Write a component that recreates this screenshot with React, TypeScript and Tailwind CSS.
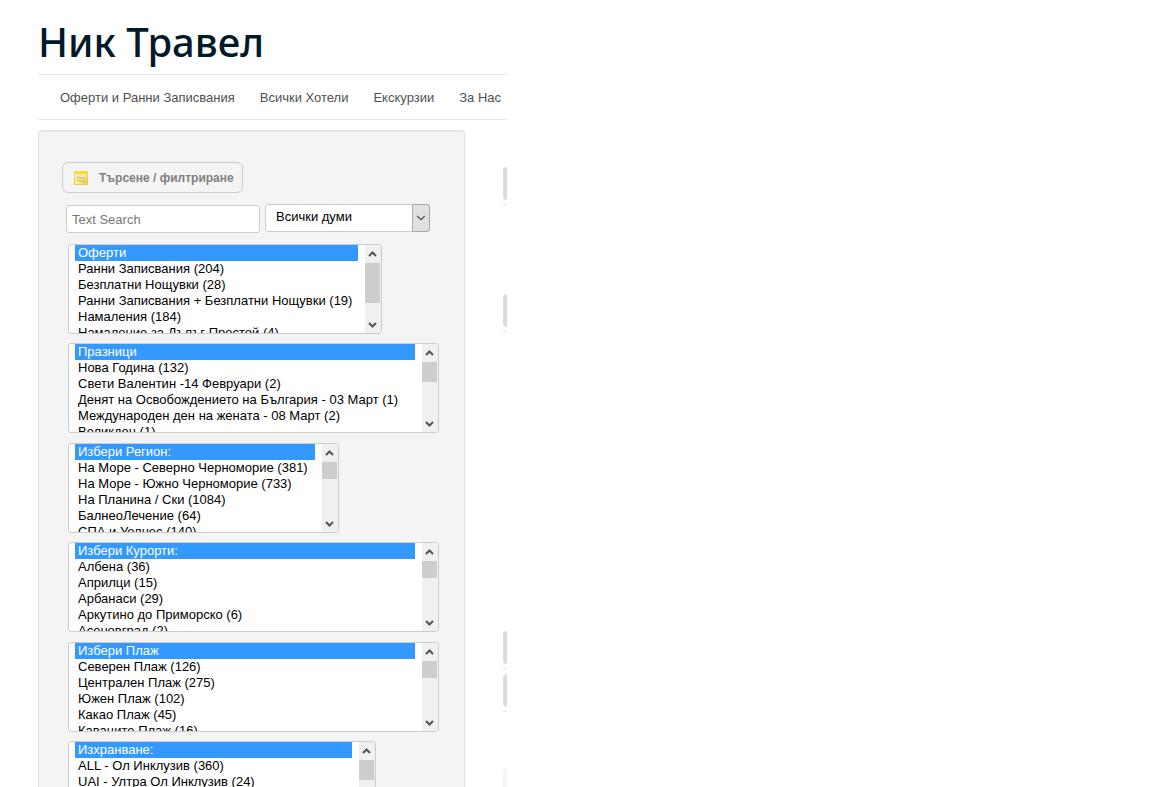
import React from 'react';
import { ChevronDown } from 'lucide-react';

type FilterList = {
  id: string;
  label: string;
  width: string;
  thumb: string;
  options: string[];
};

const filterGroups: FilterList[][] = [
  [
    {
      id: 'offers',
      label: 'Оферти',
      width: 'w-[314px]',
      thumb: 'h-10',
      options: [
        'Ранни Записвания (204)',
        'Безплатни Нощувки (28)',
        'Ранни Записвания + Безплатни Нощувки (19)',
        'Намаления (184)',
        'Намаление за Дълъг Престой (4)',
      ],
    },
    {
      id: 'holidays',
      label: 'Празници',
      width: 'w-[371px]',
      thumb: 'h-5',
      options: [
        'Нова Година (132)',
        'Свети Валентин -14 Февруари (2)',
        'Денят на Освобождението на България - 03 Март (1)',
        'Международен ден на жената - 08 Март (2)',
        'Великден (1)',
      ],
    },
  ],
  [
    {
      id: 'region',
      label: 'Избери Регион:',
      width: 'w-[271px]',
      thumb: 'h-[17px]',
      options: [
        'На Море - Северно Черноморие (381)',
        'На Море - Южно Черноморие (733)',
        'На Планина / Ски (1084)',
        'БалнеоЛечение (64)',
        'СПА и Уелнес (140)',
      ],
    },
    {
      id: 'resort',
      label: 'Избери Курорти:',
      width: 'w-[371px]',
      thumb: 'h-[17px]',
      options: [
        'Албена (36)',
        'Априлци (15)',
        'Арбанаси (29)',
        'Аркутино до Приморско (6)',
        'Асеновград (2)',
      ],
    },
  ],
  [
    {
      id: 'beach',
      label: 'Избери Плаж',
      width: 'w-[371px]',
      thumb: 'h-[17px]',
      options: [
        'Северен Плаж (126)',
        'Централен Плаж (275)',
        'Южен Плаж (102)',
        'Какао Плаж (45)',
        'Каваците Плаж (16)',
      ],
    },
    {
      id: 'board',
      label: 'Изхранване:',
      width: 'w-[308px]',
      thumb: 'h-5',
      options: [
        'ALL - Ол Инклузив (360)',
        'UAI - Ултра Ол Инклузив (24)',
        'FB - Пълен Пансион (98)',
        'HB - Полупансион (412)',
        'BB - Закуска (530)',
      ],
    },
  ],
];

const navItems = ['Оферти и Ранни Записвания', 'Всички Хотели', 'Екскурзии', 'За Нас'];

function ScrollArrow({ down = false }: { down?: boolean }) {
  return (
    <svg width="9" height="6" viewBox="0 0 9 6" fill="none" stroke="#555" strokeWidth="2" className={down ? 'rotate-180' : ''}>
      <path d="M1 5 4.500 1.500 8 5" />
    </svg>
  );
}

function FilterListBox({ list }: { list: FilterList }) {
  return (
    <div className={`flex h-[90px] max-w-full overflow-hidden rounded-[3px] border border-[#ccc] bg-white pl-1.5 ${list.width}`}>
      <select
        size={6}
        aria-label={list.label}
        defaultValue={list.label}
        className="mr-[7px] h-24 min-w-0 flex-1 appearance-none overflow-hidden rounded-none border-0 bg-white p-0 text-[13px] text-black outline-none"
      >
        {[list.label, ...list.options].map(o => (
          <option
            key={o}
            value={o}
            className="block h-4 min-h-0 px-[3px] py-0 leading-4 checked:bg-[#39f] checked:bg-[linear-gradient(#39f,#39f)] checked:text-white"
          >
            {o}
          </option>
        ))}
      </select>
      <div aria-hidden="true" className="flex w-4 flex-col items-center bg-[#f0f0f0] pr-px">
        <div className="flex h-[18px] shrink-0 items-center"><ScrollArrow /></div>
        <div className={`w-full bg-[#cdcdcd] ${list.thumb}`} />
        <div className="mt-auto flex h-4 shrink-0 items-center"><ScrollArrow down /></div>
      </div>
    </div>
  );
}

function NoteIcon() {
  return (
    <svg width="16" height="16" viewBox="0 0 16 16" aria-hidden="true">
      <defs>
        <linearGradient id="note" x1="0" y1="0" x2="1" y2="1">
          <stop offset="0" stopColor="#fff7bd" />
          <stop offset="0.6" stopColor="#fce98a" />
          <stop offset="1" stopColor="#f2c62c" />
        </linearGradient>
      </defs>
      <rect x="1.500" y="1.500" width="13" height="13" fill="url(#note)" stroke="#ecc95c" />
      <path d="M1 1h14v3H1z" fill="#f9d74d" />
      <path d="M4 7.500c2-1 3 .8 4.500.8S11 8 12 8M4 10.500c1.500-.8 3 .3 4 .3s2.500.9 4 .2" fill="none" stroke="#b5a98a" />
    </svg>
  );
}

function EdgeTab() {
  return (
    <div className="flex flex-col gap-1">
      <div className="h-[33px] w-1 rounded-l-sm bg-[#dcdcdc]" />
      <div className="h-px w-1 bg-[#e4e4e4]" />
    </div>
  );
}

export default function App() {
  return (
    <div className="h-screen overflow-hidden bg-white font-['Liberation_Sans',Arial,sans-serif] text-[13px]">
      <div className="ml-[38px] max-w-[469px]">
        <header>
          <h1 className="h-[74px] pt-[14px] font-['Noto_Sans','Open_Sans',sans-serif] text-[40px] leading-[56px] font-medium text-[#001a29]">
            Ник Травел
          </h1>
          <nav className="flex h-[46px] items-center gap-[25px] border-y border-[#e8e8e8] pt-0.5 pl-[22px] whitespace-nowrap text-[#505050]">
            {navItems.map(item => (
              <a key={item} href="#">{item}</a>
            ))}
          </nav>
        </header>

        <div className="mt-2.5 flex justify-between">
          <main className="w-full max-w-[427px] rounded-t border border-b-0 border-[#e2e2e2] bg-[#f4f4f4] pt-[31px] pb-5 shadow-[inset_0_1px_1px_rgba(0,0,0,0.05)]">
            <button type="button" className="ml-[23px] flex h-[31px] items-center gap-2.5 rounded-md border border-[#ccc] pr-2 pl-2.5 text-[12px] font-bold text-[#808080]">
              <NoteIcon />
              Търсене / филтриране
            </button>

            <div className="mt-[11px] ml-[27px] flex gap-[5px]">
              <input
                type="text"
                aria-label="Text Search"
                placeholder="Text Search"
                className="mt-px h-7 w-[194px] rounded-[3px] border border-[#ccc] bg-white px-[5px] placeholder:text-[#777]"
              />
              <div className="relative h-7 w-[165px]">
                <select aria-label="Всички думи" className="h-7 w-full appearance-none rounded-[3px] border border-[#ccc] bg-white pr-5 pb-0.5 pl-2.5 text-[13px] text-black">
                  <option>Всички думи</option>
                </select>
                <span className="pointer-events-none absolute inset-y-0 right-0 flex w-[18px] items-center justify-center rounded-r-[3px] border border-[#aaa] bg-[#e1e1e1]">
                  <ChevronDown size={14} color="#555" className="shrink-0" />
                </span>
              </div>
            </div>

            <div className="mt-[11px] ml-[29px] flex flex-col gap-2.5">
              {filterGroups.map((group, i) => (
                <div key={i} className="flex flex-col gap-[9px]">
                  {group.map(list => <FilterListBox key={list.id} list={list} />)}
                </div>
              ))}
            </div>
          </main>

          <aside aria-hidden="true" className="flex flex-col pt-[37px]">
            <EdgeTab />
            <div className="mt-[89px]"><EdgeTab /></div>
            <div className="mt-[299px] flex flex-col gap-[5px]">
              <EdgeTab />
              <EdgeTab />
            </div>
            <div className="mt-14 h-[33px] w-1 rounded-l-sm bg-[#f4f4f4]" />
          </aside>
        </div>
      </div>
    </div>
  );
}
